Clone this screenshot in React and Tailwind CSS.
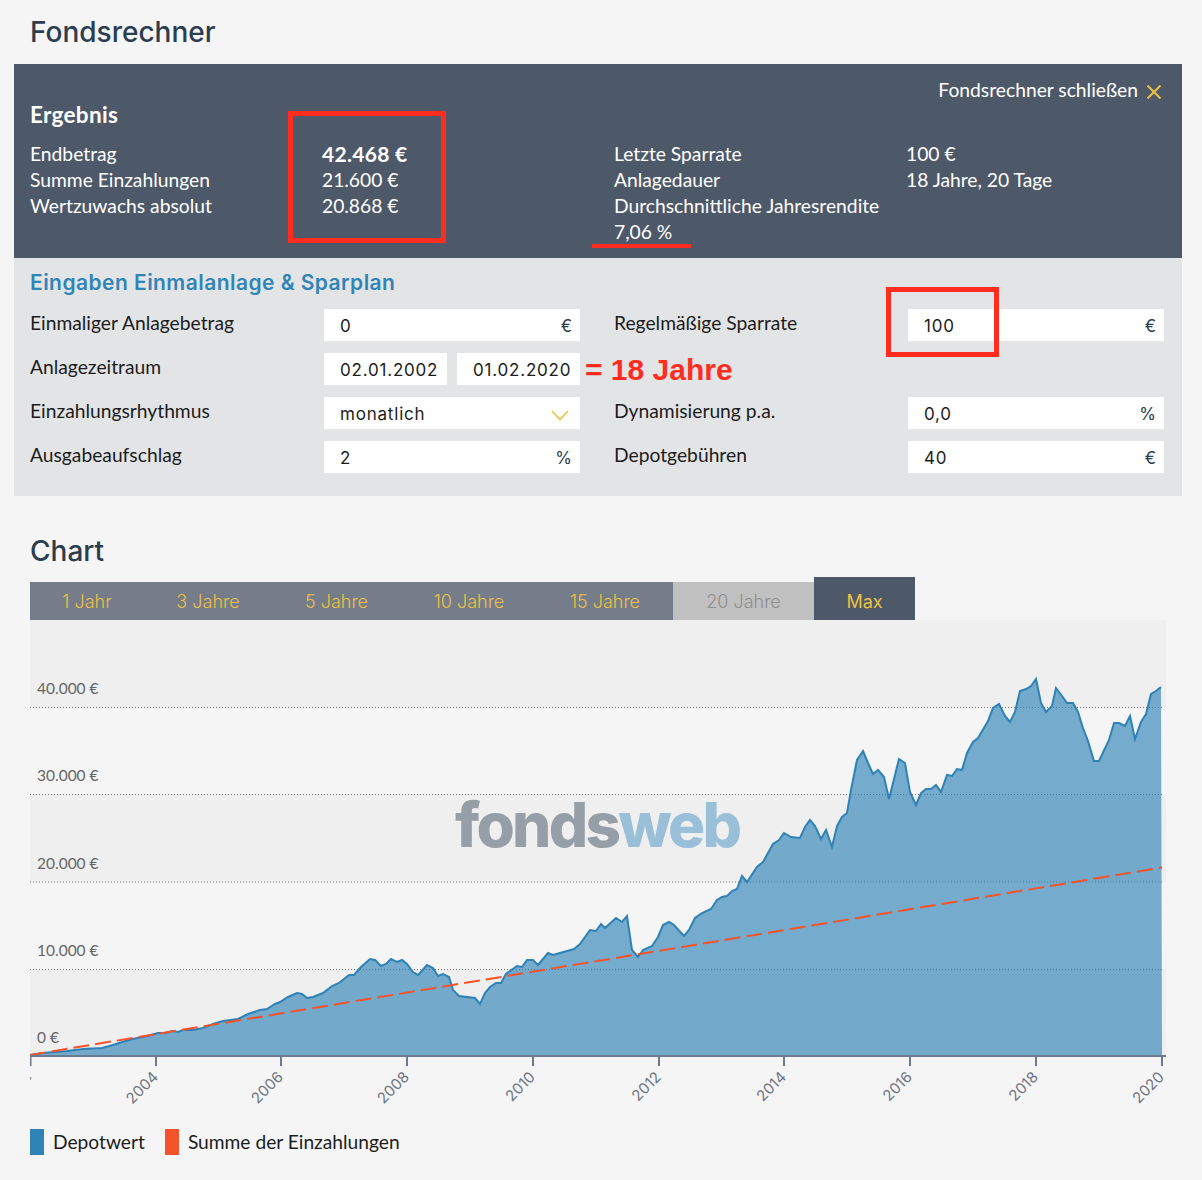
const depot = "30,1055 43,1053 67,1051 83,1049 102,1048 113,1045 122,1042 133,1039 147,1036 158,1033 165,1033 172,1031 178,1032 183,1030 193,1030 203,1028 213,1024 223,1021 238,1019 248,1014 260,1010 267,1009 275,1004 280,1002 288,997 297,993 302,994 307,998 313,997 323,993 332,986 339,983 349,975 354,975 361,967 370,959 375,960 381,966 386,964 391,959 397,962 402,960 407,964 413,972 418,975 420,973 427,965 433,968 438,976 443,974 449,977 453,990 459,996 475,998 480,1004 485,993 490,987 496,983 501,983 506,974 517,966 522,967 527,960 533,960 538,965 548,953 553,955 574,949 580,944 590,930 596,931 601,924 605,928 616,918 622,922 627,916 632,950 638,957 643,950 652,946 658,937 663,925 669,922 674,925 684,936 689,930 695,918 702,913 711,909 717,900 722,897 727,896 732,891 737,889 742,876 747,882 757,867 763,862 773,844 779,840 784,833 791,837 800,838 805,827 810,820 815,826 821,839 826,830 832,847 837,826 842,817 847,813 851,790 857,760 863,751 868,763 873,774 878,770 884,777 889,799 899,759 905,763 910,792 916,805 921,793 926,789 931,789 936,785 941,792 947,775 952,776 957,769 962,770 967,753 973,742 978,738 988,721 993,708 999,704 1005,716 1010,722 1015,712 1020,691 1026,689 1031,686 1036,679 1041,703 1046,712 1052,706 1056,688 1062,696 1067,703 1073,703 1078,712 1083,728 1088,741 1094,761 1099,761 1109,740 1114,723 1119,723 1125,726 1130,716 1135,739 1141,722 1146,714 1151,694 1156,691 1161,687";

const years = [
  [156, "2004"],
  [281, "2006"],
  [407, "2008"],
  [533, "2010"],
  [659, "2012"],
  [784, "2014"],
  [910, "2016"],
  [1036, "2018"],
  [1162, "2020"],
];

const yLabels = [
  [37, 694, "40.000 €"],
  [37, 781, "30.000 €"],
  [37, 869, "20.000 €"],
  [37, 956, "10.000 €"],
  [37, 1043, "0 €"],
];

const tabs = [
  ["1 Jahr", "w-[114px] bg-[#757c8a] text-[#edc044] h-[38px]"],
  ["3 Jahre", "w-[128px] bg-[#757c8a] text-[#edc044] h-[38px]"],
  ["5 Jahre", "w-[129px] bg-[#757c8a] text-[#edc044] h-[38px]"],
  ["10 Jahre", "w-[136px] bg-[#757c8a] text-[#edc044] h-[38px]"],
  ["15 Jahre", "w-[136px] bg-[#757c8a] text-[#edc044] h-[38px]"],
  ["20 Jahre", "w-[141px] bg-[#c0c0c0] text-[#8f8f8f] h-[38px]"],
  ["Max", "w-[101px] bg-[#4d5969] text-[#edc044] h-[43px] font-normal"],
];

function ResultRow({ label, value, bold }) {
  return (
    <>
      <div>{label}</div>
      <div className={bold ? "font-bold text-[21px] tracking-[0.3px]" : ""}>{value}</div>
    </>
  );
}

function Label({ children, className = "" }) {
  return <div className={"flex h-8 items-center pb-1 text-[#1c1c1c] " + className}>{children}</div>;
}

function Field({ value, suffix, className = "" }) {
  return (
    <div className={"flex h-8 items-center bg-white pt-1 pl-4 pr-2 " + className}>
      <input
        readOnly
        value={value}
        className="w-full min-w-0 bg-transparent font-['Inter',sans-serif] text-[17px] tracking-[0.8px] text-[#1c1c1c] outline-none"
      />
      {suffix && <span className="font-['Inter',sans-serif] text-[17px] text-[#2d3e50]">{suffix}</span>}
    </div>
  );
}

function Chart() {
  return (
    <svg width="1140" height="490" viewBox="30 620 1140 490" className="block">
      <rect x="30" y="620" width="1136" height="87" fill="#efefef" />
      <rect x="30" y="795" width="1136" height="87" fill="#efefef" />
      <rect x="30" y="969" width="1136" height="87" fill="#efefef" />
      {[707.5, 794.5, 882, 969.5].map((y) => (
        <line key={y} x1="30" x2="1162" y1={y} y2={y} stroke="#777" strokeDasharray="1 2" />
      ))}
      {yLabels.map(([x, y, t]) => (
        <text key={t} x={x} y={y} fill="#666" fontSize="15.5" fontFamily="Lato, sans-serif">
          {t}
        </text>
      ))}
      <text x="455" y="847" fontSize="62" fontWeight="800" fontFamily="Inter, sans-serif" letterSpacing="-2.8">
        <tspan fill="#969fa7">fonds</tspan>
        <tspan fill="#9abfd8">web</tspan>
      </text>
      <polygon points={depot + " 1162,1056 30,1056"} fill="#2f82b5" fillOpacity="0.65" />
      <polyline points={depot} fill="none" stroke="#2f82b5" strokeWidth="2" />
      <line x1="30" y1="1055" x2="1162" y2="867.5" stroke="#f4532c" strokeWidth="2" strokeDasharray="16 6" />
      <line x1="30" x2="1166" y1="1056" y2="1056" stroke="#6b7a90" strokeWidth="2" />
      <line x1="30.5" x2="30.5" y1="1056" y2="1066" stroke="#6b7a90" strokeWidth="2" />
      {years.map(([x, t]) => (
        <g key={t}>
          <line x1={x} x2={x} y1="1056" y2="1066" stroke="#6b7a90" strokeWidth="2" />
          <text
            x={x + 3}
            y="1078"
            textAnchor="end"
            fill="#6e7480"
            fontSize="15"
            fontFamily="Inter, sans-serif"
            transform={`rotate(-45 ${x + 3} 1078)`}
          >
            {t}
          </text>
        </g>
      ))}
      <text x="29" y="1078" fill="#6e7480" fontSize="11" fontFamily="Inter, sans-serif">
        ,
      </text>
    </svg>
  );
}

export default function App() {
  return (
    <div className="relative h-[1180px] w-[1202px] overflow-hidden bg-[#f5f5f5] font-['Lato',sans-serif] text-[19.25px]">
      <h1 className="flex h-16 items-center pl-[30px] font-['Inter',sans-serif] text-[28px] font-medium text-[#2b3d4f]">
        Fondsrechner
      </h1>

      <div className="ml-[14px] h-[194px] w-[1168px] bg-[#4d5969] px-4 pt-[14px] text-white">
        <div className="flex h-6 items-center justify-end gap-[9px] pr-[5px]">
          <span>Fondsrechner schließen</span>
          <svg width="14" height="14" viewBox="0 0 14 14" className="mt-[3px]">
            <path d="M0.5 0.5 L13.5 13.5 M13.5 0.5 L0.5 13.5" stroke="#edc044" strokeWidth="2" fill="none" />
          </svg>
        </div>
        <h2 className="mb-[13px] h-[26px] text-[22.5px] leading-[26px] font-bold tracking-[0.3px]">Ergebnis</h2>
        <div className="grid grid-cols-[292px_292px_292px_1fr] auto-rows-[26px] items-center leading-[26px]">
          <ResultRow label="Endbetrag" value="42.468 €" bold />
          <ResultRow label="Letzte Sparrate" value="100 €" />
          <ResultRow label="Summe Einzahlungen" value="21.600 €" />
          <ResultRow label="Anlagedauer" value="18 Jahre, 20 Tage" />
          <ResultRow label="Wertzuwachs absolut" value="20.868 €" />
          <ResultRow label="Durchschnittliche Jahresrendite" value="" />
          <div className="col-start-3">7,06 %</div>
        </div>
      </div>

      <div className="ml-[14px] h-[238px] w-[1168px] bg-[#e3e4e6] px-4 pt-[11px]">
        <h2 className="mb-[13px] h-[27px] font-['Inter',sans-serif] text-[21px] leading-[27px] font-semibold tracking-[0.45px] text-[#3184b6]">
          Eingaben Einmalanlage &amp; Sparplan
        </h2>
        <div className="grid grid-cols-[294px_256px_34px_294px_256px] auto-rows-[32px] gap-y-3">
          <Label>Einmaliger Anlagebetrag</Label>
          <Field value="0" suffix="€" />
          <Label className="col-start-4">Regelmäßige Sparrate</Label>
          <Field value="100" suffix="€" />

          <Label>Anlagezeitraum</Label>
          <div className="flex gap-[10px]">
            <Field value="02.01.2002" className="w-[123px]" />
            <Field value="01.02.2020" className="w-[123px]" />
          </div>
          <div className="col-span-3" />

          <Label>Einzahlungsrhythmus</Label>
          <div className="flex h-8 items-center justify-between bg-white pt-1 pl-4 pr-2">
            <span className="font-['Inter',sans-serif] text-[17px] tracking-[0.8px] text-[#1c1c1c]">monatlich</span>
            <svg width="18" height="11" viewBox="0 0 18 11" className="mr-[3px]">
              <path d="M1 1 L9 9.5 L17 1" stroke="#edc044" strokeWidth="1.6" fill="none" />
            </svg>
          </div>
          <Label className="col-start-4">Dynamisierung p.a.</Label>
          <Field value="0,0" suffix="%" />

          <Label>Ausgabeaufschlag</Label>
          <Field value="2" suffix="%" />
          <Label className="col-start-4">Depotgebühren</Label>
          <Field value="40" suffix="€" />
        </div>
      </div>

      <h2 className="mt-[37px] h-9 pl-[30px] font-['Inter',sans-serif] text-[28px] leading-9 font-medium text-[#2b3d4f]">
        Chart
      </h2>
      <div className="mt-[1px] flex h-[50px] items-end pl-[30px]">
        {tabs.map(([t, cls]) => (
          <div key={t} className={"flex items-end justify-center pb-[5px] font-['Inter',sans-serif] text-[18px] font-light " + cls}>
            {t}
          </div>
        ))}
      </div>

      <div className="pl-[30px]">
        <Chart />
      </div>

      <div className="mt-[19px] flex h-[26px] items-center pl-[30px] text-[19.2px] text-[#1c1c1c]">
        <span className="h-[26px] w-[14px] bg-[#2f82b5]" />
        <span className="ml-[9px]">Depotwert</span>
        <span className="ml-5 h-[26px] w-[14px] bg-[#f4532c]" />
        <span className="ml-[9px]">Summe der Einzahlungen</span>
      </div>

      {/* rote Markierungen */}
      <div className="absolute top-[111px] left-[288px] h-[132px] w-[158px] border-[5px] border-[#ff2d1f]" />
      <div className="absolute top-[287px] left-[886px] h-[70px] w-[113px] border-[5px] border-[#ff2d1f]" />
      <div className="absolute top-[244px] left-[592px] h-1 w-[99px] bg-[#ff2d1f]" />
      <div className="absolute top-[352px] left-[585px] font-['Liberation_Sans',sans-serif] text-[30px] leading-9 font-bold text-[#ff2d1f]">
        = 18 Jahre
      </div>
    </div>
  );
}
